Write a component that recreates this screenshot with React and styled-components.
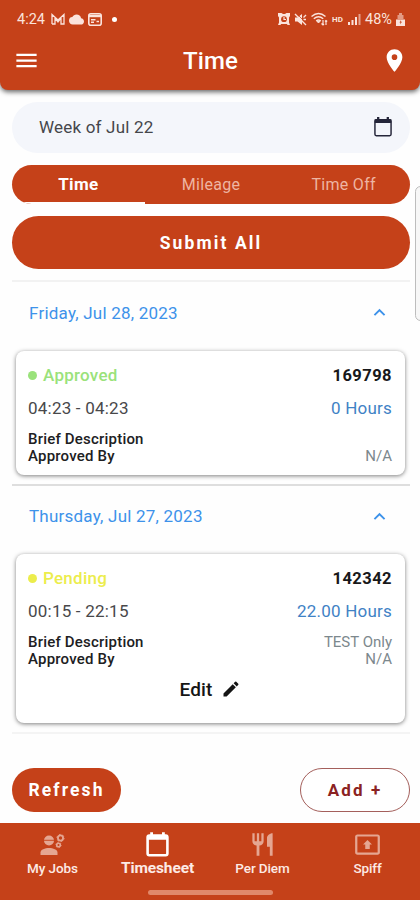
import styled, { createGlobalStyle } from "styled-components";
import {
    MdCloud,
    MdEdit,
    MdKeyboardArrowUp,
    MdLocationOn,
    MdMenu,
    MdPresentToAll,
    MdRestaurant,
} from "react-icons/md";

const GlobalStyle = createGlobalStyle`
    * {
        box-sizing: border-box;
    }
    body {
        margin: 0;
        background: #fefefe;
        font-family: Roboto, "Liberation Sans", sans-serif;
    }
`;

const brand = "#c54119";

const Screen = styled.div`
    position: relative;
    display: flex;
    flex-direction: column;
    width: 420px;
    height: 900px;
    overflow: hidden;
    background: #fefefe;
`;

const Header = styled.header`
    flex: none;
    height: 90px;
    color: #fff;
    background: ${brand};
    border-radius: 0 0 8px 8px;
    box-shadow: 0 2px 5px rgba(0, 0, 0, 0.6);
`;

const StatusBar = styled.div`
    display: flex;
    justify-content: space-between;
    height: 38px;
    padding: 0 15px 0 17px;
    color: #fbe3dc;
`;

const StatusGroup = styled.div`
    display: flex;
    align-items: center;
    gap: ${({ $gap }) => $gap}px;
`;

const StatusText = styled.span`
    width: ${({ $width }) => $width}px;
    font-size: ${({ $size }) => $size || 14.5}px;
    font-weight: ${({ $bold }) => ($bold ? 700 : 400)};
    white-space: nowrap;
`;

const Dot = styled.span`
    width: 5px;
    height: 5px;
    margin-left: 6px;
    border-radius: 50%;
    background: #fff;
`;

const TitleBar = styled.div`
    display: grid;
    grid-template-columns: 40px 1fr 40px;
    align-items: center;
    height: 45px;
    padding: 0 12px 0 13px;

    svg:last-child {
        justify-self: end;
    }
`;

const Title = styled.h1`
    margin: 0;
    font-size: 24px;
    font-weight: 500;
    letter-spacing: 0.1px;
    text-align: center;
`;

const Content = styled.main`
    display: flex;
    flex: 1;
    flex-direction: column;
    padding: 12px 10px 0 12px;
`;

const WeekField = styled.div`
    display: flex;
    align-items: center;
    justify-content: space-between;
    height: 51px;
    padding: 0 16px 1px 27px;
    color: #45464b;
    font-size: 17px;
    letter-spacing: 0.2px;
    background: #f4f6fb;
    border-radius: 26px;

    svg {
        color: #25263a;
    }
`;

const Tabs = styled.div`
    display: grid;
    grid-template-columns: repeat(3, 1fr);
    height: 39px;
    margin-top: 12px;
    overflow: hidden;
    background: ${brand};
    border-radius: 20px;
`;

const Tab = styled.div`
    display: flex;
    align-items: center;
    justify-content: center;
    padding-top: 1px;
    color: ${({ $active }) => ($active ? "#fff" : "#eeb5a2")};
    font-size: ${({ $active }) => ($active ? 17 : 16)}px;
    font-weight: ${({ $active }) => ($active ? 700 : 400)};
    letter-spacing: 0.3px;
    border-bottom: 2px solid
        ${({ $active }) => ($active ? "#fefefe" : "transparent")};
`;

const SubmitButton = styled.button`
    height: 53px;
    margin: 12px 0 11px;
    padding: 0;
    color: #fff;
    font: 700 17.5px Roboto, sans-serif;
    letter-spacing: 2.1px;
    background: ${brand};
    border: 0;
    border-radius: 27px;
`;

const Day = styled.section`
    border-top: 2px solid ${({ $strong }) => ($strong ? "#dedede" : "#f2f2f2")};
`;

const DayHeader = styled.div`
    display: flex;
    align-items: center;
    justify-content: space-between;
    height: ${({ $height }) => $height}px;
    padding: 0 19px 8px 17px;
    color: #3d92ea;
    font-size: 17px;
    letter-spacing: 0.22px;
`;

const Card = styled.article`
    height: ${({ $height }) => $height}px;
    margin: 0 5px 9px 4px;
    padding: 12px 13px 0 12px;
    background: #fff;
    border-radius: 8px;
    box-shadow: 0 1px 4px rgba(0, 0, 0, 0.5);
`;

const Row = styled.div`
    display: flex;
    align-items: center;
    justify-content: space-between;
    height: ${({ $height }) => $height}px;
    margin-bottom: ${({ $gap }) => $gap || 0}px;
`;

const Status = styled.span`
    display: flex;
    align-items: center;
    gap: 6px;
    color: ${({ $color }) => $color};
    font-size: 17px;
    font-weight: 500;
    letter-spacing: 0.25px;

    &::before {
        content: "";
        width: 9px;
        height: 9px;
        border-radius: 50%;
        background: currentColor;
    }
`;

const JobNumber = styled.span`
    color: #18181a;
    font-size: 16.5px;
    font-weight: 700;
    letter-spacing: 0.45px;
`;

const Range = styled.span`
    color: #48484a;
    font-size: 17px;
    letter-spacing: 0.22px;
`;

const Hours = styled.span`
    color: #3f82c5;
    font-size: 17px;
    letter-spacing: 0.22px;
`;

const Label = styled.span`
    color: #202022;
    font-size: 15px;
    font-weight: 500;
    letter-spacing: 0.2px;
`;

const Detail = styled.span`
    color: #7c888d;
    font-size: 15px;
`;

const EditButton = styled.button`
    display: flex;
    align-items: center;
    gap: 8px;
    height: 24px;
    margin: 10px auto 0;
    padding: 0;
    color: #151515;
    font: 500 19px Roboto, sans-serif;
    letter-spacing: 0.2px;
    background: none;
    border: 0;
`;

const Actions = styled.div`
    display: flex;
    justify-content: space-between;
    padding-top: 34px;
    border-top: 2px solid #f4f4f4;
`;

const PillButton = styled.button`
    width: ${({ $width }) => $width}px;
    height: 44px;
    padding: 0;
    color: ${({ $outline }) => ($outline ? "#8b2222" : "#fff")};
    font: 700 ${({ $outline }) => ($outline ? 17 : 17.5)}px Roboto, sans-serif;
    letter-spacing: 2.1px;
    background: ${({ $outline }) => ($outline ? "#fff" : brand)};
    border: ${({ $outline }) => ($outline ? "1px solid #a45f5b" : 0)};
    border-radius: 22px;
`;

const BottomNav = styled.nav`
    flex: none;
    display: grid;
    grid-template-columns: repeat(4, 1fr);
    grid-template-rows: 67px 5px;
    height: 77px;
    background: ${brand};
`;

const NavItem = styled.div`
    display: flex;
    flex-direction: column;
    align-items: center;
    padding-top: 8px;
    color: ${({ $active }) => ($active ? "#fff" : "#e5a692")};
`;

const NavLabel = styled.span`
    margin-top: 2px;
    color: #fdeae5;
    font-size: ${({ $active }) => ($active ? 15.5 : 13.5)}px;
    font-weight: ${({ $active }) => ($active ? 700 : 500)};
    line-height: 16px;
    letter-spacing: -0.1px;
`;

const HomeIndicator = styled.div`
    grid-column: 1 / -1;
    justify-self: center;
    width: 125px;
    height: 5px;
    background: #e0886a;
    border-radius: 3px;
`;

// Edge panel handle, sits on top of the page and runs off the right side
const EdgeHandle = styled.div`
    position: absolute;
    top: 186px;
    right: -6px;
    width: 11px;
    height: 135px;
    background: #f7f7f7;
    border: 1px solid #bdbdbd;
    border-radius: 6px;
`;

const CalendarIcon = ({ size, stroke = 2 }) => (
    <svg width={size} height={size} viewBox="0 0 24 24">
        <rect x="3.2" y="4" width="17.600" height="17.500" rx="1.5" fill="none" stroke="currentColor" strokeWidth={stroke} />
        <path d="M3 3.500h18v4.200H3zM5.500 1.200H8V4H5.500zM16 1.200h2.500V4H16z" fill="currentColor" />
    </svg>
);

const NavCalendarIcon = () => <CalendarIcon size={27} stroke={2.3} />;

const WorkerIcon = () => (
    <svg width="27" height="27" viewBox="0 0 27 27">
        <path d="M1.500 24v-2.500c0-3 4.500-4.500 8.500-4.500s8.500 1.500 8.500 4.500V24z" fill="currentColor" />
        <circle cx="10" cy="9.500" r="5" fill="currentColor" />
        <path d="M5 9.300h10" stroke={brand} strokeWidth="0.9" />
        <g fill="none" stroke="currentColor">
            <circle cx="21.500" cy="7" r="2.600" strokeWidth="1.800" />
            <circle cx="21.500" cy="7" r="3.600" strokeWidth="1" strokeDasharray="1.500 2.270" />
            <circle cx="19.500" cy="14" r="1.800" strokeWidth="1.600" />
            <circle cx="19.500" cy="14" r="2.700" strokeWidth="0.800" strokeDasharray="1.200 1.630" />
        </g>
    </svg>
);

const MailIcon = () => (
    <svg width="14" height="12" viewBox="0 0 14 12">
        <path
            d="M1 11V1.5L7 7l6-5.500V11H10V5M4 5v6H1M4 5l3 4 3-4"
            fill="none"
            stroke="currentColor"
            strokeWidth="1.3"
        />
    </svg>
);

const NewsIcon = () => (
    <svg width="14" height="13" viewBox="0 0 14 13">
        <rect x="0.8" y="0.8" width="12.4" height="11.4" rx="2" fill="none" stroke="currentColor" strokeWidth="1.6" />
        <path d="M1 3h12" stroke="currentColor" strokeWidth="2.4" />
        <path d="M3 6.800h4.500M3 9.300h3M8.500 8.500H11" fill="none" stroke="currentColor" strokeWidth="1.6" />
    </svg>
);

const AlarmIcon = () => (
    <svg width="12" height="12" viewBox="0 0 12 12">
        <path d="M0 0h3.500L5 1h2l1.500-1H12v3l-1 1.500v5L12 12H9.500L9 11H3l-.5 1H0l1-2.500v-5L0 3z" fill="currentColor" />
        <circle cx="6" cy="6.200" r="2.900" fill={brand} />
        <path d="M6 4v2.500h2" fill="none" stroke="currentColor" strokeWidth="1.2" />
    </svg>
);

const MuteIcon = () => (
    <svg width="13" height="13" viewBox="0 0 13 13">
        <path d="M1 4.500h2.500L8 1v11L3.500 8.500H1z" fill="currentColor" />
        <path d="M1 1l11 11M9.500 4.500L12 2M9.500 6.500H12" stroke="currentColor" strokeWidth="1.4" />
        <path d="M2.500 .5l10 10" stroke={brand} strokeWidth="0.8" />
    </svg>
);

const WifiIcon = () => (
    <svg width="17" height="14" viewBox="0 0 17 14" fill="none" stroke="currentColor">
        <path d="M.5 4.500Q7.500 -1.500 14.500 4.500M2.800 6.800Q7.500 2.800 12.200 6.800M5.200 9Q7.500 7 9.800 9" strokeWidth="1.5" />
        <path d="M6 9.300h3L7.500 11z" fill="currentColor" />
        <path d="M12 8v5M10.500 11.500L12 13l1-1M15 13V8.500M14 9.500l1-1 1.200 1" strokeWidth="1.200" />
    </svg>
);

const SignalIcon = () => (
    <svg width="13" height="12" viewBox="0 0 13 12" fill="currentColor">
        <path d="M0 9h2v3H0zM3.500 7h2v5h-2zM7 4h2v8H7z" />
        <path d="M10.500 1h2v11h-2z" opacity="0.6" />
    </svg>
);

const BatteryIcon = () => (
    <svg width="9" height="13" viewBox="0 0 9 13">
        <path d="M3 0h3v2h1.500v4H9v7H0V6h1.500V2H3z" fill="currentColor" opacity="0.55" />
        <path d="M0 7h9v6H0z" fill="currentColor" />
        <path d="M5 7L3.500 9.500h1L4 11.500l2-2.800H4.800z" fill={brand} />
    </svg>
);

const days = [
    {
        date: "Friday, Jul 28, 2023",
        headerHeight: 69,
        cardHeight: 124,
        status: "Approved",
        color: "#9ae27b",
        job: "169798",
        range: "04:23 - 04:23",
        hours: "0 Hours",
        description: "",
        approvedBy: "N/A",
    },
    {
        date: "Thursday, Jul 27, 2023",
        headerHeight: 68,
        cardHeight: 169,
        status: "Pending",
        color: "#eced4c",
        job: "142342",
        range: "00:15 - 22:15",
        hours: "22.00 Hours",
        description: "TEST Only",
        approvedBy: "N/A",
        editable: true,
    },
];

const navItems = [
    { label: "My Jobs", Icon: WorkerIcon },
    { label: "Timesheet", Icon: NavCalendarIcon, active: true },
    { label: "Per Diem", Icon: MdRestaurant },
    { label: "Spiff", Icon: MdPresentToAll },
];

const DayEntry = ({ day, strong }) => (
    <Day $strong={strong}>
        <DayHeader $height={day.headerHeight}>
            <span>{day.date}</span>
            <MdKeyboardArrowUp size={23} />
        </DayHeader>
        <Card $height={day.cardHeight}>
            <Row $height={24} $gap={9}>
                <Status $color={day.color}>{day.status}</Status>
                <JobNumber>{day.job}</JobNumber>
            </Row>
            <Row $height={24} $gap={10}>
                <Range>{day.range}</Range>
                <Hours>{day.hours}</Hours>
            </Row>
            <Row $height={17}>
                <Label>Brief Description</Label>
                <Detail>{day.description}</Detail>
            </Row>
            <Row $height={17}>
                <Label>Approved By</Label>
                <Detail>{day.approvedBy}</Detail>
            </Row>
            {day.editable && (
                <EditButton>
                    Edit <MdEdit size={20} />
                </EditButton>
            )}
        </Card>
    </Day>
);

const App = () => {
    const navListRendered = navItems.map(({ label, Icon, active }) => (
        <NavItem key={label} $active={active}>
            <Icon size={27} />
            <NavLabel $active={active}>{label}</NavLabel>
        </NavItem>
    ));

    return (
        <Screen>
            <GlobalStyle />
            <Header>
                <StatusBar>
                    <StatusGroup $gap={4}>
                        <StatusText $width={30}>4:24</StatusText>
                        <MailIcon />
                        <MdCloud size={15} />
                        <NewsIcon />
                        <Dot />
                    </StatusGroup>
                    <StatusGroup $gap={4}>
                        <AlarmIcon />
                        <MuteIcon />
                        <WifiIcon />
                        <StatusText $size={8} $bold $width={12}>
                            HD
                        </StatusText>
                        <SignalIcon />
                        <StatusText $width={27}>48%</StatusText>
                        <BatteryIcon />
                    </StatusGroup>
                </StatusBar>
                <TitleBar>
                    <MdMenu size={27} />
                    <Title>Time</Title>
                    <MdLocationOn size={27} />
                </TitleBar>
            </Header>
            <Content>
                <WeekField>
                    <span>Week of Jul 22</span>
                    <CalendarIcon size={22} stroke={1.6} />
                </WeekField>
                <Tabs>
                    <Tab $active>Time</Tab>
                    <Tab>Mileage</Tab>
                    <Tab>Time Off</Tab>
                </Tabs>
                <SubmitButton>Submit All</SubmitButton>
                {days.map((day, idx) => (
                    <DayEntry key={day.date} day={day} strong={idx > 0} />
                ))}
                <Actions>
                    <PillButton $width={109}>Refresh</PillButton>
                    <PillButton $width={110} $outline>
                        Add +
                    </PillButton>
                </Actions>
            </Content>
            <BottomNav>
                {navListRendered}
                <HomeIndicator />
            </BottomNav>
            <EdgeHandle />
        </Screen>
    );
};

export default App;
